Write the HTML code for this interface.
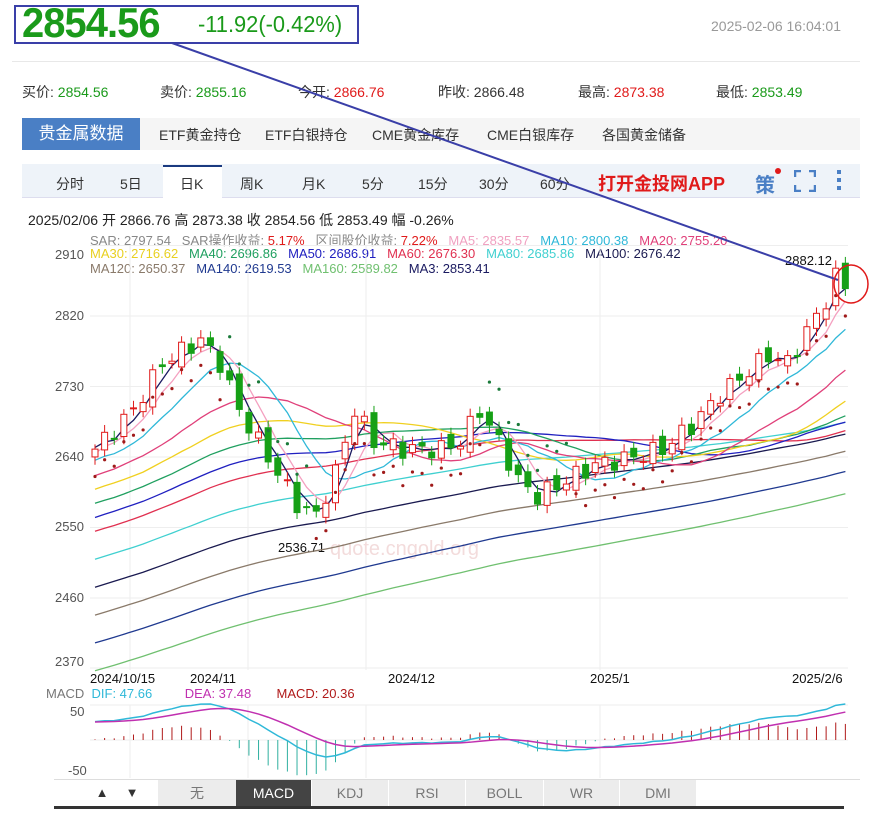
<!DOCTYPE html>
<html><head><meta charset="utf-8">
<style>
*{margin:0;padding:0;box-sizing:border-box}
body{width:870px;height:817px;background:#fff;font-family:"Liberation Sans","Noto Sans CJK SC",sans-serif;position:relative;overflow:hidden;color:#333}
.a{position:absolute;white-space:nowrap}
.g{color:#1a9a1a}.r{color:#e01a1a}
</style></head><body>
<div class="a" style="left:14px;top:5px;width:345px;height:39px;border:2px solid #3a3fa8"></div>
<div class="a g" style="left:22px;top:2px;font-size:42px;line-height:42px;font-weight:bold;letter-spacing:-1px;transform:scaleX(0.95);transform-origin:left top">2854.56</div>
<div class="a g" style="left:198px;top:11px;font-size:23px;transform:scaleX(0.95);transform-origin:left top">-11.92(-0.42%)</div>
<div class="a" style="left:711px;top:18px;font-size:14px;color:#999">2025-02-06 16:04:01</div>
<div class="a" style="left:12px;top:61px;width:848px;height:1px;background:#e8e8e8"></div>
<div class="a" style="left:22px;top:82px;font-size:14px">买价: <span class="g">2854.56</span></div>
<div class="a" style="left:160px;top:82px;font-size:14px">卖价: <span class="g">2855.16</span></div>
<div class="a" style="left:298px;top:82px;font-size:14px">今开: <span class="r">2866.76</span></div>
<div class="a" style="left:438px;top:82px;font-size:14px">昨收: 2866.48</div>
<div class="a" style="left:578px;top:82px;font-size:14px">最高: <span class="r">2873.38</span></div>
<div class="a" style="left:716px;top:82px;font-size:14px">最低: <span class="g">2853.49</span></div>
<div class="a" style="left:22px;top:118px;width:838px;height:32px;background:#f5f5f5"></div>
<div class="a" style="left:22px;top:118px;width:118px;height:32px;background:#4a7fc5;color:#fff;font-size:17px;line-height:32px;text-align:center">贵金属数据</div>
<div class="a" style="left:159px;top:125px;font-size:14px">ETF黄金持仓</div>
<div class="a" style="left:265px;top:125px;font-size:14px">ETF白银持仓</div>
<div class="a" style="left:372px;top:125px;font-size:14px">CME黄金库存</div>
<div class="a" style="left:487px;top:125px;font-size:14px">CME白银库存</div>
<div class="a" style="left:602px;top:125px;font-size:14px">各国黄金储备</div>
<div class="a" style="left:22px;top:164px;width:838px;height:34px;background:#eef3f9;border-bottom:1px solid #dde"></div>
<div class="a" style="left:163px;top:165px;width:59px;height:33px;background:#fff;border-top:2px solid #1a3a80"></div>
<div class="a" style="left:56px;top:174px;font-size:14px">分时</div>
<div class="a" style="left:120px;top:174px;font-size:14px">5日</div>
<div class="a" style="left:180px;top:174px;font-size:14px">日K</div>
<div class="a" style="left:240px;top:174px;font-size:14px">周K</div>
<div class="a" style="left:302px;top:174px;font-size:14px">月K</div>
<div class="a" style="left:362px;top:174px;font-size:14px">5分</div>
<div class="a" style="left:418px;top:174px;font-size:14px">15分</div>
<div class="a" style="left:479px;top:174px;font-size:14px">30分</div>
<div class="a" style="left:540px;top:174px;font-size:14px">60分</div>
<div class="a r" style="left:598px;top:170px;font-size:18px;font-weight:bold">打开金投网APP</div>
<div class="a" style="left:755px;top:169px;font-size:20px;color:#4a7fc5;font-weight:bold">策</div>
<div class="a" style="left:775px;top:168px;width:6px;height:6px;border-radius:3px;background:#e01a1a"></div>
<svg class="a" style="left:794px;top:170px" width="22" height="22"><path d="M1 7V1h6M15 1h6v6M21 15v6h-6M7 21H1v-6" fill="none" stroke="#4a7fc5" stroke-width="2.5"/></svg>
<div class="a" style="left:837px;top:170px;width:4px;height:4px;background:#4a7fc5;box-shadow:0 8px 0 #4a7fc5,0 16px 0 #4a7fc5"></div>
<div class="a" style="left:28px;top:210px;font-size:14px;color:#222">2025/02/06 开 2866.76 高 2873.38 收 2854.56 低 2853.49 幅 -0.26%</div>
<div class="a" style="left:90px;top:230px;font-size:13px;color:#888">SAR: 2797.54 &nbsp; SAR操作收益: <span class="r">5.17%</span> &nbsp; 区间股价收益: <span class="r">7.22%</span> &nbsp; <span style="color:#f0a0c0">MA5: 2835.57</span> &nbsp; <span style="color:#2fb8d8">MA10: 2800.38</span> &nbsp; <span style="color:#e0407a">MA20: 2755.20</span></div>
<div class="a" style="left:90px;top:246px;font-size:13px"><span style="color:#e8d020">MA30: 2716.62</span> &nbsp; <span style="color:#20a060">MA40: 2696.86</span> &nbsp; <span style="color:#2020c0">MA50: 2686.91</span> &nbsp; <span style="color:#e03050">MA60: 2676.30</span> &nbsp; <span style="color:#40d0d0">MA80: 2685.86</span> &nbsp; <span style="color:#1a1a50">MA100: 2676.42</span></div>
<div class="a" style="left:90px;top:261px;font-size:13px"><span style="color:#8a7a6a">MA120: 2650.37</span> &nbsp; <span style="color:#203a90">MA140: 2619.53</span> &nbsp; <span style="color:#70c070">MA160: 2589.82</span> &nbsp; <span style="color:#1a1a60">MA3: 2853.41</span></div>
<div class="a" style="left:55px;top:247px;font-size:13px;color:#555">2910</div>
<div class="a" style="left:55px;top:308px;font-size:13px;color:#555">2820</div>
<div class="a" style="left:55px;top:379px;font-size:13px;color:#555">2730</div>
<div class="a" style="left:55px;top:449px;font-size:13px;color:#555">2640</div>
<div class="a" style="left:55px;top:519px;font-size:13px;color:#555">2550</div>
<div class="a" style="left:55px;top:590px;font-size:13px;color:#555">2460</div>
<div class="a" style="left:55px;top:654px;font-size:13px;color:#555">2370</div>
<div class="a" style="left:90px;top:671px;font-size:13px;color:#111">2024/10/15</div>
<div class="a" style="left:190px;top:671px;font-size:13px;color:#111">2024/11</div>
<div class="a" style="left:388px;top:671px;font-size:13px;color:#111">2024/12</div>
<div class="a" style="left:590px;top:671px;font-size:13px;color:#111">2025/1</div>
<div class="a" style="left:792px;top:671px;font-size:13px;color:#111">2025/2/6</div>
<div class="a" style="left:278px;top:540px;font-size:13px;color:#111">2536.71</div>
<div class="a" style="left:785px;top:253px;font-size:13px;color:#111">2882.12</div>
<div class="a" style="left:46px;top:686px;font-size:13px;color:#777">MACD &nbsp;<span style="color:#2fb8d8">DIF: 47.66</span> &nbsp; &nbsp; &nbsp; &nbsp; <span style="color:#c030b0">DEA: 37.48</span> &nbsp; &nbsp; &nbsp; <span style="color:#b01a1a">MACD: 20.36</span></div>
<div class="a" style="left:70px;top:704px;font-size:13px;color:#555">50</div>
<div class="a" style="left:68px;top:763px;font-size:13px;color:#555">-50</div>
<svg id="ch" class="a" style="left:0;top:0" width="870" height="817"></svg>
<div class="a" style="left:54px;top:779px;width:806px;height:1px;background:#ddd"></div>
<div class="a" style="left:90px;top:780px;width:24px;height:26px;font-size:13px;line-height:26px;text-align:center;background:#fff">▲</div>
<div class="a" style="left:120px;top:780px;width:24px;height:26px;font-size:13px;line-height:26px;text-align:center;background:#fff">▼</div>
<div class="a" style="left:158px;top:780px;width:538px;height:26px;background:#ececec"></div>
<div class="a" style="left:236px;top:780px;width:75px;height:26px;background:#444"></div>
<div class="a" style="left:158px;top:780px;width:78px;font-size:14px;line-height:26px;text-align:center;color:#777">无</div>
<div class="a" style="left:236px;top:780px;width:75px;font-size:14px;line-height:26px;text-align:center;color:#fff">MACD</div>
<div class="a" style="left:311px;top:780px;width:77px;font-size:14px;line-height:26px;text-align:center;color:#777;border-left:1px solid #fff">KDJ</div>
<div class="a" style="left:388px;top:780px;width:77px;font-size:14px;line-height:26px;text-align:center;color:#777;border-left:1px solid #fff">RSI</div>
<div class="a" style="left:465px;top:780px;width:78px;font-size:14px;line-height:26px;text-align:center;color:#777;border-left:1px solid #fff">BOLL</div>
<div class="a" style="left:543px;top:780px;width:76px;font-size:14px;line-height:26px;text-align:center;color:#777;border-left:1px solid #fff">WR</div>
<div class="a" style="left:619px;top:780px;width:77px;font-size:14px;line-height:26px;text-align:center;color:#777;border-left:1px solid #fff">DMI</div>
<div class="a" style="left:54px;top:806px;width:790px;height:3px;background:#333"></div>
<script>
var s=document.getElementById('ch'),h='';
function Y(p){return 316+(2820-p)*0.783}
[245.5,316,386.5,457,527.5,598,668].forEach(function(y){h+='<line x1="90" x2="848" y1="'+y+'" y2="'+y+'" stroke="#eee"/>'});
[130,248,366,600].forEach(function(x){h+='<line x1="'+x+'" x2="'+x+'" y1="245" y2="670" stroke="#eee"/><line x1="'+x+'" x2="'+x+'" y1="705" y2="778" stroke="#eee"/>'});
h+='<line x1="90" x2="848" y1="705" y2="705" stroke="#eee"/><line x1="90" x2="848" y1="740" y2="740" stroke="#eee"/>';
var K=[[0,2650],[4,2700],[7,2760],[11,2790],[13,2760],[15,2700],[18,2640],[21,2580],[23,2565],[25,2620],[27,2700],[29,2660],[32,2650],[36,2650],[38,2660],[40,2700],[42,2660],[44,2610],[46,2590],[49,2610],[52,2630],[56,2640],[59,2650],[62,2680],[65,2720],[68,2750],[70,2770],[72,2760],[74,2800],[76,2840],[77,2870],[78,2855]];
var C=[];for(var k=0;k<K.length-1;k++){var a=K[k],b=K[k+1];for(var i=a[0];i<b[0];i++)C.push(a[1]+(b[1]-a[1])*(i-a[0])/(b[0]-a[0])+12*Math.sin(i*2.3));}C.push(2855);
var P=[];for(var i=0;i<160;i++)P.push(2080+570*i/160+10*Math.sin(i));var A=P.concat(C),off=160;
function X(i){return 95+i*9.62}
function ma(n,col){var pts=[];for(var i=0;i<C.length;i++){var t=0;for(var j=0;j<n;j++)t+=A[off+i-j];pts.push(X(i).toFixed(1)+','+Y(t/n).toFixed(1))}h+='<polyline points="'+pts.join(' ')+'" fill="none" stroke="'+col+'" stroke-width="1.3"/>'}
h+='<text x="330" y="555" font-size="20" fill="#f3dcdc" font-family="Liberation Sans">quote.cngold.org</text>';
ma(160,'#70c070');ma(140,'#203a90');ma(120,'#8a7a6a');ma(100,'#1a1a50');ma(80,'#40d0d0');ma(60,'#e03050');ma(50,'#2020c0');ma(40,'#20a060');ma(30,'#f0d020');ma(20,'#e0407a');ma(10,'#2fb8d8');ma(5,'#f4a0c0');ma(3,'#1a1a60');
for(var i=0;i<C.length;i++){var o=i?C[i-1]+8*Math.cos(i*1.7):2640,c=C[i],hi=Math.max(o,c)+6+4*Math.abs(Math.sin(i)),lo=Math.min(o,c)-6-4*Math.abs(Math.cos(i));var up=c>=o,col=up?'#e01a1a':'#16a016',x=X(i);
h+='<line x1="'+x+'" x2="'+x+'" y1="'+Y(hi)+'" y2="'+Y(lo)+'" stroke="'+col+'"/>';var y1=Y(Math.max(o,c)),hh=Math.max(1,Math.abs(Y(o)-Y(c)));
h+='<rect x="'+(x-3)+'" y="'+y1+'" width="6" height="'+hh+'" fill="'+(up?'#fff':col)+'" stroke="'+col+'"/>';}
for(var i=0;i<C.length;i++){var v=(i>=14&&i<23)||(i>=41&&i<50)?C[i]+40+(i%9)*3:C[i]-35;h+='<circle cx="'+X(i)+'" cy="'+Y(v)+'" r="1.6" fill="'+(v>C[i]?'#1a7a3a':'#a01a1a')+'"/>'}
var e12=A[0],e26=A[0],dea=0,D=[],E=[];for(var i=0;i<A.length;i++){e12=e12+(A[i]-e12)*2/13;e26=e26+(A[i]-e26)*2/27;var dif=e12-e26;dea=dea+(dif-dea)*0.2;if(i>=off){D.push(dif);E.push(dea)}}
var mx=0;D.forEach(function(d){mx=Math.max(mx,Math.abs(d))});var sc=36/mx;
var pd=[],pe=[];for(var i=0;i<C.length;i++){var x=X(i),m=(D[i]-E[i])*2;h+='<line x1="'+x+'" x2="'+x+'" y1="740" y2="'+(740-m*sc)+'" stroke="'+(m>0?'#b01a1a':'#30b0a0')+'"/>';pd.push(x+','+(740-D[i]*sc));pe.push(x+','+(740-E[i]*sc))}
h+='<polyline points="'+pd.join(' ')+'" fill="none" stroke="#2fb8d8" stroke-width="1.5"/><polyline points="'+pe.join(' ')+'" fill="none" stroke="#c030b0" stroke-width="1.5"/>';
h+='<line x1="172" y1="43" x2="838" y2="280" stroke="#3a3fa8" stroke-width="2"/><ellipse cx="851" cy="284" rx="17" ry="19" fill="none" stroke="#e01a1a" stroke-width="1.5"/>';
s.innerHTML=h;
</script>
</body></html>
